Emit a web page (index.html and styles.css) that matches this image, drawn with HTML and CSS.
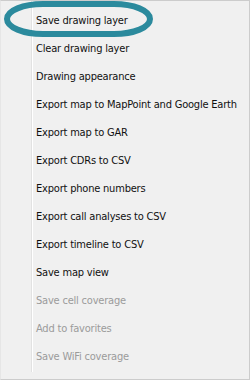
FILE: index.html
```html
<!DOCTYPE html>
<html lang="en">
<head>
  <meta charset="UTF-8" />
  <title>Map menu</title>
  <link rel="stylesheet" href="styles.css">
</head>
<body>
  <div class="menu">
    <div class="gutter"></div>
    <ul class="items">
      <li class="item">Save drawing layer</li>
      <li class="item">Clear drawing layer</li>
      <li class="item">Drawing appearance</li>
      <li class="item">Export map to MapPoint and Google Earth</li>
      <li class="item">Export map to GAR</li>
      <li class="item">Export CDRs to CSV</li>
      <li class="item">Export phone numbers</li>
      <li class="item">Export call analyses to CSV</li>
      <li class="item">Export timeline to CSV</li>
      <li class="item">Save map view</li>
      <li class="item disabled">Save cell coverage</li>
      <li class="item disabled">Add to favorites</li>
      <li class="item disabled">Save WiFi coverage</li>
    </ul>
    <!-- highlight ring round the first entry -->
    <svg class="ring" width="162" height="40" viewBox="0 0 162 40">
      <rect x="10" y="4" width="143" height="30" rx="36" ry="15" fill="none" stroke="#2b8a9d" stroke-width="6" />
    </svg>
  </div>
</body>
</html>
```

FILE: styles.css
```css
body {
  margin: 0;
  background: #f0f0f0;
  font-family: 'DejaVu Sans Condensed', 'DejaVu Sans', sans-serif;
  font-stretch: condensed;
}
.menu {
  position: relative;
  display: flex;
  width: 250px;
  height: 380px;
  box-sizing: border-box;
  background: #f0f0f0;
  border: 1px solid #cccccc;
  border-left-color: #e6e6e6;
}
.gutter {
  flex-shrink: 0;
  width: 30px;
  margin-bottom: 7px;
  border-right: 1px solid #e2e2e2;
  box-shadow: 1px 0 0 #ffffff;
}
.items {
  list-style: none;
  margin: 0;
  padding: 6px 0 0 4px;
}
.item {
  height: 28px;
  line-height: 28px;
  font-size: 11px;
  letter-spacing: -0.2px;
  color: #101010;
  white-space: nowrap;
}
.disabled {
  color: #9b9b9b;
}
.ring {
  position: absolute;
  left: -4px;
  top: -1px;
}
```
